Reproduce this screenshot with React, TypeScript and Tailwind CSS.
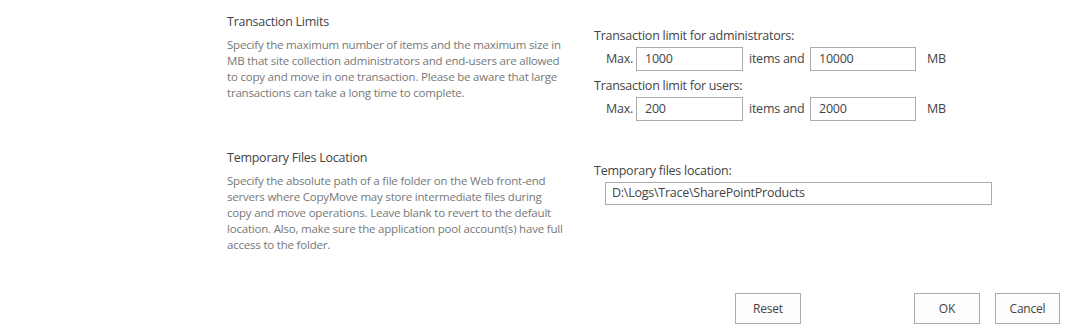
import React from "react";

const label = "text-[12.5px] leading-[16px] tracking-[-0.25px] text-[#444]";
const desc = "text-[11.5px] leading-[16px] tracking-[-0.2px] text-[#777] whitespace-nowrap";

function TextBox({ value, className }: { value: string; className: string }) {
  return (
    <div
      className={`border border-[#ababab] bg-white flex items-center text-[12.5px] tracking-[-0.25px] text-[#444] ${className}`}
    >
      {value}
    </div>
  );
}

function LimitRow({ items, size }: { items: string; size: string }) {
  return (
    <div className={`flex items-center pl-[12px] ${label}`}>
      <span className="w-[30px]">Max.</span>
      <TextBox value={items} className="w-[107px] h-[24px] pl-[8px]" />
      <span className="w-[67px] pl-[6px]">items and</span>
      <TextBox value={size} className="w-[106px] h-[24px] pl-[8px]" />
      <span className="pl-[11px]">MB</span>
    </div>
  );
}

function Button({ text, className }: { text: string; className: string }) {
  return (
    <button
      className={`h-[31px] border border-[#ababab] bg-[#fdfdfd] text-[12px] tracking-[-0.2px] text-[#444] ${className}`}
    >
      {text}
    </button>
  );
}

function Desc({ lines }: { lines: string[] }) {
  return (
    <div className={`mt-[7px] ${desc}`}>
      {lines.map((l) => (
        <div key={l}>{l}</div>
      ))}
    </div>
  );
}

export default function App() {
  return (
    <div
      className="w-[1070px] h-[333px] bg-white pt-[14px] overflow-hidden"
      style={{ fontFamily: '"Segoe UI", "Open Sans", sans-serif' }}
    >
      <div className="flex">
        <div className="w-[594px] pl-[227px]">
          <h3 className={label}>Transaction Limits</h3>
          <Desc
            lines={[
              "Specify the maximum number of items and the maximum size in",
              "MB that site collection administrators and end-users are allowed",
              "to copy and move in one transaction. Please be aware that large",
              "transactions can take a long time to complete.",
            ]}
          />
        </div>
        <div className="pt-[14px]">
          <div className={label}>Transaction limit for administrators:</div>
          <div className="mt-[3px]">
            <LimitRow items="1000" size="10000" />
          </div>
          <div className={`mt-[7px] ${label}`}>Transaction limit for users:</div>
          <div className="mt-[3px]">
            <LimitRow items="200" size="2000" />
          </div>
        </div>
      </div>

      <div className="flex mt-[29px]">
        <div className="w-[594px] pl-[227px]">
          <h3 className={label}>Temporary Files Location</h3>
          <Desc
            lines={[
              "Specify the absolute path of a file folder on the Web front-end",
              "servers where CopyMove may store intermediate files during",
              "copy and move operations. Leave blank to revert to the default",
              "location. Also, make sure the application pool account(s) have full",
              "access to the folder.",
            ]}
          />
        </div>
        <div className="pt-[13px]">
          <div className={label}>Temporary files location:</div>
          <div className="mt-[3px] pl-[11px]">
            <TextBox
              value="D:\Logs\Trace\SharePointProducts"
              className="w-[387px] h-[23px] pl-[6px]"
            />
          </div>
        </div>
      </div>

      <div className="flex mt-[40px] pl-[735px]">
        <Button text="Reset" className="w-[66px]" />
        <Button text="OK" className="w-[66px] ml-[113px]" />
        <Button text="Cancel" className="w-[65px] ml-[15px]" />
      </div>
    </div>
  );
}
